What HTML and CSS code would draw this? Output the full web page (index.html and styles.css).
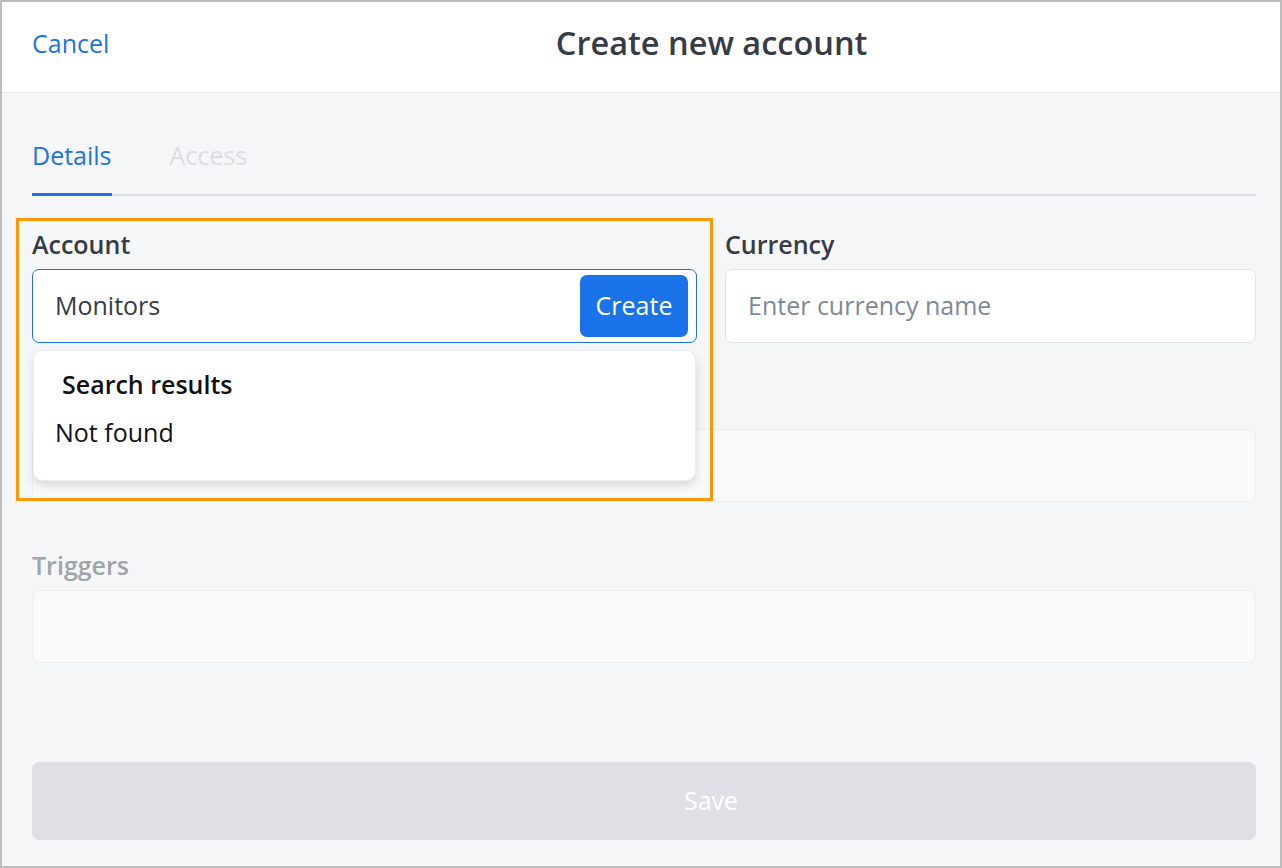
FILE: index.html
```html
<!DOCTYPE html>
<html lang="en">
<head>
<meta charset="utf-8">
<title>Create new account</title>
<link rel="stylesheet" href="styles.css">
</head>
<body>
<div class="frame">
  <header class="topbar">
    <a class="cancel" href="#">Cancel</a>
    <h1 class="title">Create new account</h1>
  </header>
  <main class="content">
    <nav class="tabs">
      <span class="tab active">Details</span>
      <span class="tab disabled">Access</span>
    </nav>
    <div class="form">
      <div class="row two">
        <div class="field account">
          <div class="label">Account</div>
          <div class="combo focused">
            <span class="value">Monitors</span>
            <button class="create">Create</button>
          </div>
          <div class="dropdown">
            <div class="dd-title">Search results</div>
            <div class="dd-empty">Not found</div>
          </div>
          <div class="highlight"></div>
        </div>
        <div class="field">
          <div class="label">Currency</div>
          <div class="combo">
            <span class="placeholder">Enter currency name</span>
          </div>
        </div>
      </div>
      <div class="row second">
        <div class="field">
          <div class="label">&nbsp;</div>
          <div class="combo muted"></div>
        </div>
      </div>
      <div class="row third">
        <div class="field">
          <div class="label faded">Triggers</div>
          <div class="combo muted"></div>
        </div>
      </div>
    </div>
    <button class="save">Save</button>
  </main>
</div>
</body>
</html>
```

FILE: styles.css
```css
* { box-sizing: border-box; }
html, body { margin: 0; padding: 0; }
body {
  font-family: "Open Sans", "Noto Sans", "Liberation Sans", sans-serif;
  background: #ffffff;
}
.frame {
  width: 1282px;
  height: 868px;
  border: 2px solid #bdbdbd;
  background: #f5f6f8;
  display: flex;
  flex-direction: column;
}
.topbar {
  height: 91px;
  background: #ffffff;
  border-bottom: 1px solid #e6e7eb;
  display: flex;
  align-items: center;
  padding: 0 24px 8px 30px;
}
.cancel {
  color: #1a73e8;
  text-decoration: none;
  font-size: 25px;
  line-height: 34px;
}
.title {
  flex: 1;
  margin: 0;
  text-align: center;
  padding-left: 58px;
  font-size: 32.5px;
  font-weight: 600;
  color: #363b45;
  line-height: 42px;
}
.content {
  flex: 1;
  padding: 45px 24px 0 30px;
  display: flex;
  flex-direction: column;
}
.tabs {
  display: flex;
  gap: 58px;
  border-bottom: 2px solid #dfe1e6;
}
.tab {
  font-size: 25px;
  line-height: 34px;
  padding: 0 0 21px;
  color: #dcdee3;
}
.tab.active {
  color: #1a73e8;
  border-bottom: 3px solid #1a73e8;
  margin-bottom: -2px;
  padding-bottom: 21px;
}
.tab.disabled { padding-bottom: 24px; margin-bottom: -2px; }
.form {
  margin-top: 31px;
  display: flex;
  flex-direction: column;
}
.row.two {
  display: grid;
  grid-template-columns: 665px 1fr;
  gap: 28px;
}
.row.second { margin-top: 44px; }
.row.third { margin-top: 46px; }
.field { position: relative; }
.label {
  font-size: 25px;
  line-height: 34px;
  font-weight: 600;
  color: #363b45;
  margin-bottom: 8px;
}
.label.faded { color: #a0a3aa; }
.combo {
  height: 74px;
  border: 1px solid #e1e3e8;
  border-radius: 7px;
  background: #ffffff;
  display: flex;
  align-items: center;
  padding: 5px 8px 5px 22px;
  font-size: 25px;
}
.combo.focused { border-color: #1a73e8; }
.combo.muted {
  height: 73px;
  background: #fafafa;
  border-color: #ededef;
}
.value { flex: 1; color: #363b45; margin-bottom: 2px; }
.placeholder { color: #7f8899; margin-bottom: 2px; }
.create {
  width: 108px;
  height: 62px;
  border: 0;
  border-radius: 7px;
  background: #1a73e8;
  color: #ffffff;
  font-family: inherit;
  font-size: 25px;
  padding: 0 0 2px;
}
.dropdown {
  position: absolute;
  top: calc(100% + 7px);
  left: 1px;
  right: 1px;
  height: 131px;
  background: #ffffff;
  border-radius: 10px;
  border: 1px solid #eceef1;
  box-shadow: 0 5px 10px rgba(0, 0, 0, 0.13);
  padding: 16px 0 0 0;
  z-index: 2;
}
.dd-title {
  font-size: 25px;
  line-height: 34px;
  font-weight: 600;
  color: #111111;
  padding-left: 28px;
}
.dd-empty {
  margin-top: 14px;
  font-size: 25px;
  line-height: 34px;
  color: #111111;
  padding-left: 21px;
}
.highlight {
  position: absolute;
  left: -16px;
  top: -9px;
  width: 697px;
  height: 283px;
  border: 3px solid #ff9800;
  z-index: 3;
  pointer-events: none;
}
.save {
  margin-top: 99px;
  height: 78px;
  border: 0;
  border-radius: 7px;
  background: #dfe0e5;
  color: #ffffff;
  font-family: inherit;
  font-size: 25px;
  padding: 0 0 2px 134px;
  text-align: center;
}
```
